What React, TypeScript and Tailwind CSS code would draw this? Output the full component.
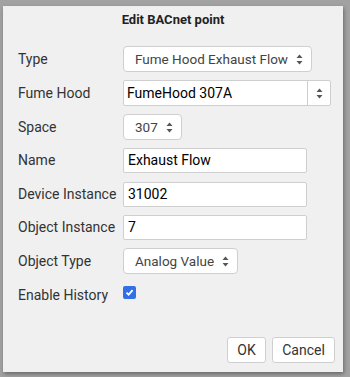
const Arrows = () => (
  <svg width="7" height="11" viewBox="0 0 7 11" className="shrink-0">
    <path d="M3.5 0.5 L6.5 4 L0.5 4 Z" fill="#555" />
    <path d="M3.5 10.5 L6.5 7 L0.5 7 Z" fill="#555" />
  </svg>
)

const Label = ({ children }: { children: string }) => (
  <div className="w-[105px] shrink-0 text-[14px] text-[#333]">{children}</div>
)

const Select = ({ value, width }: { value: string; width: string }) => (
  <div
    className={`${width} h-[26px] flex items-center justify-between pl-[11px] pr-[8px] bg-white border border-[#cfcfcf] rounded-[4px] text-[13.5px] text-[#444]`}
  >
    <span>{value}</span>
    <Arrows />
  </div>
)

const TextInput = ({ value }: { value: string }) => (
  <div className="w-[184px] h-[25px] flex items-center px-[4px] bg-white border border-[#cfcfcf] rounded-[2px] text-[14px] text-black">
    {value}
  </div>
)

export default function App() {
  return (
    <div className="w-[350px] h-[377px] bg-[#a2a2a2] pt-[6px] pl-[3px] overflow-hidden" style={{ fontFamily: 'Roboto, "Liberation Sans", sans-serif' }}>
      <div className="w-[340px] h-[366px] bg-[#f0f0f0] shadow-[1px_2px_4px_rgba(0,0,0,0.35)] flex flex-col">
        <div className="h-[26px] pt-[4px] text-center text-[13px] font-bold text-[#222]">Edit BACnet point</div>

        <div className="flex flex-col gap-[8px] pl-[15px] pt-[14px]">
          <div className="flex items-center h-[26px]">
            <Label>Type</Label>
            <Select value="Fume Hood Exhaust Flow" width="w-[189px]" />
          </div>

          <div className="flex items-center h-[26px]">
            <Label>Fume Hood</Label>
            <div className="w-[208px] h-[26px] flex bg-white border border-[#cfcfcf] rounded-[2px] text-[14px] text-black">
              <div className="flex-1 flex items-center px-[3px]">FumeHood 307A</div>
              <div className="w-[23px] flex items-center justify-center border-l border-[#cfcfcf]">
                <Arrows />
              </div>
            </div>
          </div>

          <div className="flex items-center h-[26px]">
            <Label>Space</Label>
            <Select value="307" width="w-[59px]" />
          </div>

          <div className="flex items-center h-[25px]">
            <Label>Name</Label>
            <TextInput value="Exhaust Flow" />
          </div>

          <div className="flex items-center h-[26px]">
            <Label>Device Instance</Label>
            <TextInput value="31002" />
          </div>

          <div className="flex items-center h-[25px]">
            <Label>Object Instance</Label>
            <TextInput value="7" />
          </div>

          <div className="flex items-center h-[26px]">
            <Label>Object Type</Label>
            <Select value="Analog Value" width="w-[115px]" />
          </div>

          <div className="flex items-center h-[26px]">
            <Label>Enable History</Label>
            <div className="mb-[5px] w-[13px] h-[13px] rounded-[2px] bg-[#3370e6] flex items-center justify-center">
              <svg width="9" height="9" viewBox="0 0 9 9">
                <path d="M1.5 4.6 L3.6 6.7 L7.6 2.2" stroke="white" strokeWidth="1.8" fill="none" />
              </svg>
            </div>
          </div>
        </div>

        <div className="mt-auto mb-[9px] mr-[8px] flex justify-end gap-[6px]">
          <button className="w-[39px] h-[26px] bg-white border border-[#cfcfcf] rounded-[3px] text-[14px] text-[#333]">OK</button>
          <button className="w-[63px] h-[26px] bg-white border border-[#cfcfcf] rounded-[3px] text-[14px] text-[#333]">Cancel</button>
        </div>
      </div>
    </div>
  )
}
